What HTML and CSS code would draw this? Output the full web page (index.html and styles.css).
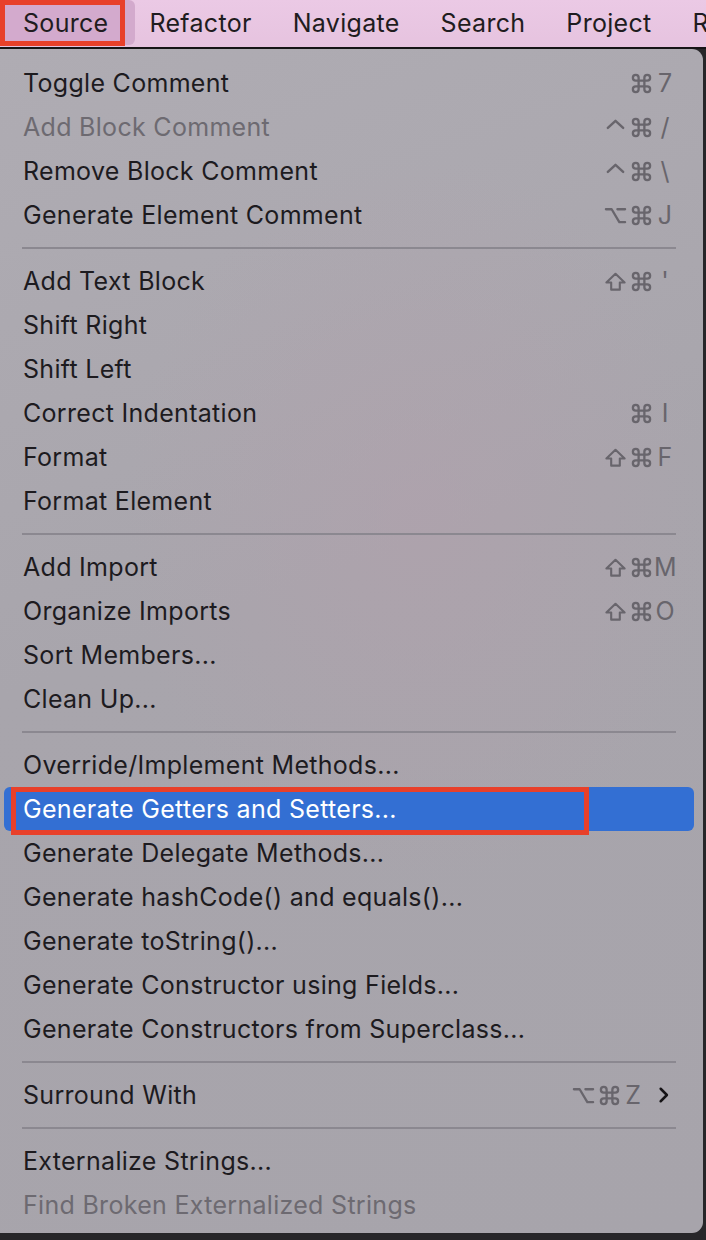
FILE: index.html
```html
<!DOCTYPE html>
<html>
<head>
<meta charset="utf-8">
<link rel="stylesheet" href="styles.css">
</head>
<body>
<svg class="defs" width="0" height="0" aria-hidden="true">
  <defs>
    <symbol id="i-cmd" viewBox="0 0 24 24"><path d="M15 6v12a3 3 0 1 0 3-3H6a3 3 0 1 0 3 3V6a3 3 0 1 0-3 3h12a3 3 0 1 0-3-3" fill="none" stroke="currentColor" stroke-width="2.4" stroke-linecap="round" stroke-linejoin="round"/></symbol>
    <symbol id="i-shift" viewBox="0 0 24 24"><path d="M12 4 L21.5 13 H16.5 V20.5 H7.5 V13 H2.5 Z" fill="none" stroke="currentColor" stroke-width="2.2" stroke-linejoin="round"/></symbol>
    <symbol id="i-ctrl" viewBox="0 0 24 24"><path d="M4 12.5 L12 5 L20 12.5" fill="none" stroke="currentColor" stroke-width="2.5" stroke-linecap="round" stroke-linejoin="round"/></symbol>
    <symbol id="i-opt" viewBox="0 0 24 24"><path d="M2 5.5 H8 L16 19 H22 M14 5.5 H22" fill="none" stroke="currentColor" stroke-width="2.4" stroke-linecap="round" stroke-linejoin="round"/></symbol>
    <symbol id="i-chev" viewBox="0 0 24 24"><path d="M8 4.5 L15.5 12 L8 19.5" fill="none" stroke="currentColor" stroke-width="3" stroke-linecap="round" stroke-linejoin="round"/></symbol>
  </defs>
</svg>
<div class="screen">
  <div class="menubar">
    <div class="title active">Source</div>
    <div class="title">Refactor</div>
    <div class="title">Navigate</div>
    <div class="title">Search</div>
    <div class="title">Project</div>
    <div class="title">Run</div>
    <div class="annot annot-title"></div>
  </div>
  <div class="desk">
    <div class="menu">
      <div class="item"><span class="label">Toggle Comment</span><span class="keys"><span class="mod"><svg class="g"><use href="#i-cmd"/></svg></span><span class="key">7</span></span></div>
      <div class="item disabled"><span class="label">Add Block Comment</span><span class="keys"><span class="mod"><svg class="g"><use href="#i-ctrl"/></svg></span><span class="mod"><svg class="g"><use href="#i-cmd"/></svg></span><span class="key">/</span></span></div>
      <div class="item"><span class="label">Remove Block Comment</span><span class="keys"><span class="mod"><svg class="g"><use href="#i-ctrl"/></svg></span><span class="mod"><svg class="g"><use href="#i-cmd"/></svg></span><span class="key">\</span></span></div>
      <div class="item"><span class="label">Generate Element Comment</span><span class="keys"><span class="mod"><svg class="g"><use href="#i-opt"/></svg></span><span class="mod"><svg class="g"><use href="#i-cmd"/></svg></span><span class="key">J</span></span></div>
      <div class="sep"></div>
      <div class="item"><span class="label">Add Text Block</span><span class="keys"><span class="mod"><svg class="g"><use href="#i-shift"/></svg></span><span class="mod"><svg class="g"><use href="#i-cmd"/></svg></span><span class="key">'</span></span></div>
      <div class="item"><span class="label">Shift Right</span></div>
      <div class="item"><span class="label">Shift Left</span></div>
      <div class="item"><span class="label">Correct Indentation</span><span class="keys"><span class="mod"><svg class="g"><use href="#i-cmd"/></svg></span><span class="key">I</span></span></div>
      <div class="item"><span class="label">Format</span><span class="keys"><span class="mod"><svg class="g"><use href="#i-shift"/></svg></span><span class="mod"><svg class="g"><use href="#i-cmd"/></svg></span><span class="key">F</span></span></div>
      <div class="item"><span class="label">Format Element</span></div>
      <div class="sep"></div>
      <div class="item"><span class="label">Add Import</span><span class="keys"><span class="mod"><svg class="g"><use href="#i-shift"/></svg></span><span class="mod"><svg class="g"><use href="#i-cmd"/></svg></span><span class="key">M</span></span></div>
      <div class="item"><span class="label">Organize Imports</span><span class="keys"><span class="mod"><svg class="g"><use href="#i-shift"/></svg></span><span class="mod"><svg class="g"><use href="#i-cmd"/></svg></span><span class="key">O</span></span></div>
      <div class="item"><span class="label">Sort Members...</span></div>
      <div class="item"><span class="label">Clean Up...</span></div>
      <div class="sep"></div>
      <div class="item"><span class="label">Override/Implement Methods...</span></div>
      <div class="item selected"><span class="label">Generate Getters and Setters...</span><div class="annot annot-row"></div></div>
      <div class="item"><span class="label">Generate Delegate Methods...</span></div>
      <div class="item"><span class="label">Generate hashCode() and equals()...</span></div>
      <div class="item"><span class="label">Generate toString()...</span></div>
      <div class="item"><span class="label">Generate Constructor using Fields...</span></div>
      <div class="item"><span class="label">Generate Constructors from Superclass...</span></div>
      <div class="sep"></div>
      <div class="item"><span class="label">Surround With</span><span class="keys"><span class="mod"><svg class="g"><use href="#i-opt"/></svg></span><span class="mod"><svg class="g"><use href="#i-cmd"/></svg></span><span class="key">Z</span><span class="sub"><svg class="chev"><use href="#i-chev"/></svg></span></span></div>
      <div class="sep"></div>
      <div class="item"><span class="label">Externalize Strings...</span></div>
      <div class="item disabled"><span class="label">Find Broken Externalized Strings</span></div>
    </div>
  </div>
</div>
</body>
</html>
```
FILE: styles.css
```css
* { box-sizing: border-box; }
html, body { margin: 0; padding: 0; }
body {
  width: 706px;
  height: 1240px;
  overflow: hidden;
  background: #272629;
  font-family: Inter, "Noto Sans", "Liberation Sans", sans-serif;
}
.defs { position: absolute; width: 0; height: 0; overflow: hidden; }
.screen { width: 706px; height: 1240px; display: flex; flex-direction: column; }

.menubar {
  position: relative;
  height: 49px;
  flex: none;
  display: flex;
  align-items: stretch;
  padding: 0 0 2px 2px;
  background: linear-gradient(180deg, #ebc9e5 0%, #e6c3df 100%);
  border-bottom: 2px solid #161416;
  white-space: nowrap;
  overflow: hidden;
}
.title {
  display: flex;
  align-items: center;
  padding: 0 20.5px;
  font-size: 25px;
  letter-spacing: 0.3px;
  color: #1f1c20;
  border-radius: 6px;
}
.title.active { background: #d3aacd; margin-left: -6px; padding-left: 27px; padding-right: 26.5px; margin-right: -6px; }

.annot {
  position: absolute;
  border: 5px solid #e8402a;
  pointer-events: none;
}
.annot-title { left: 0; top: 0; width: 125px; height: 46px; }

.desk { flex: 1; display: flex; align-items: flex-start; }
.menu {
  width: 703px;
  height: 1184px;
  padding: 12px 9px 6px 4px;
  border-radius: 0 11px 11px 0;
  background:
    radial-gradient(ellipse 420px 520px at 420px 470px, rgba(178,160,172,0.55), rgba(178,160,172,0) 70%),
    linear-gradient(160deg, #afacb3 0%, #a8a5ac 45%, #a7a4ab 100%);
  display: flex;
  flex-direction: column;
}
.item {
  position: relative;
  height: 44px;
  flex: none;
  display: flex;
  align-items: center;
  padding: 0 18px 0 19px;
  border-radius: 6px;
  font-size: 25px;
  letter-spacing: 0.3px;
  color: #1d1b1f;
  white-space: nowrap;
}
.item.disabled { color: #6d6a71; }
.item.selected { background: #336fd3; color: #ffffff; }
.label { flex: 1; }
.keys { display: flex; align-items: center; color: #68656c; letter-spacing: 0; }
.mod { width: 26px; height: 24px; display: flex; align-items: center; justify-content: center; }
.key { width: 22px; text-align: center; font-size: 25px; }
.sub { width: 32px; display: flex; justify-content: flex-end; padding-right: 2px; color: #151316; }
.g { width: 23px; height: 23px; }
.chev { width: 20px; height: 20px; }
.sep {
  height: 22px;
  flex: none;
  display: flex;
  align-items: center;
  padding: 0 18px;
}
.sep::before {
  content: "";
  display: block;
  width: 100%;
  height: 2px;
  background: #8b8890;
}
.annot-row { left: 7px; top: 0; width: 578px; height: 48px; }
```
